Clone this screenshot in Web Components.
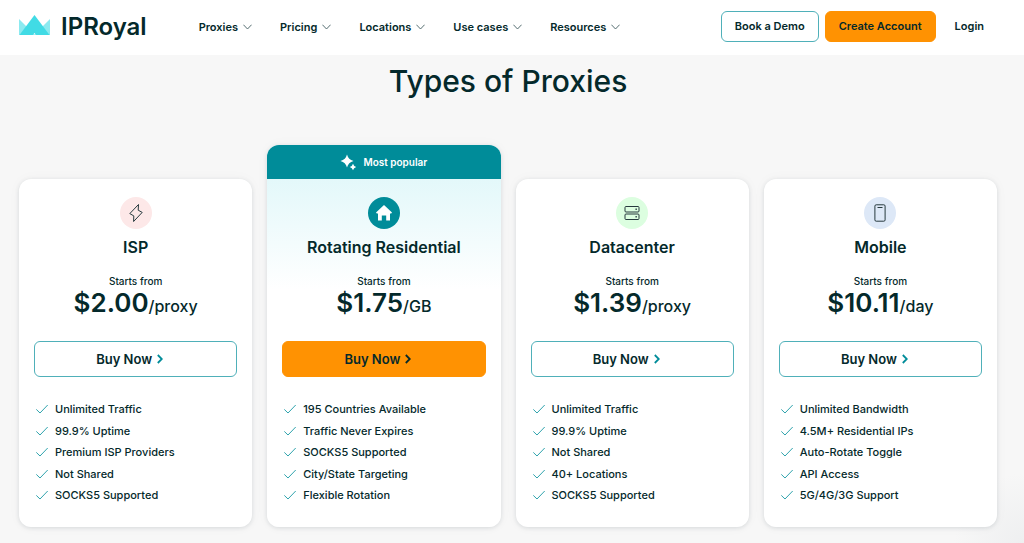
<!DOCTYPE html>
<html lang="en">
<head>
<meta charset="utf-8">
<meta name="viewport" content="width=device-width, initial-scale=1">
<title>IPRoyal - Types of Proxies</title>
<style>
  :root {
    --ink: #04292b;
    --teal: #008c99;
    --orange: #ff9202;
    --gutter-start: 19px;
    --gutter-end: 27px;
  }
  html { background: #f7f7f7; }
  body {
    margin: 0;
    color: var(--ink);
    font-family: Inter, "Liberation Sans", sans-serif;
    background: radial-gradient(circle 70px at 100% 100%, #eeeff0, #f7f7f7);
  }
</style>
</head>
<body>
<site-header>
  <brand-logo slot="brand">IPRoyal</brand-logo>
  <nav-item>Proxies</nav-item>
  <nav-item>Pricing</nav-item>
  <nav-item>Locations</nav-item>
  <nav-item>Use cases</nav-item>
  <nav-item>Resources</nav-item>
  <action-link slot="actions" variant="outline">Book a Demo</action-link>
  <action-link slot="actions" variant="solid">Create Account</action-link>
  <action-link slot="actions">Login</action-link>
</site-header>

<proxy-types>
  <span slot="heading">Types of Proxies</span>
  <price-card icon="bolt" tint="#fde8e8">
    <span slot="name">ISP</span><span slot="amount">$2.00</span><span slot="unit">/proxy</span>
    <check-item>Unlimited Traffic</check-item>
    <check-item>99.9% Uptime</check-item>
    <check-item>Premium ISP Providers</check-item>
    <check-item>Not Shared</check-item>
    <check-item>SOCKS5 Supported</check-item>
  </price-card>
  <price-card icon="home" tint="#008c99" popular>
    <span slot="name">Rotating Residential</span><span slot="amount">$1.75</span><span slot="unit">/GB</span>
    <check-item>195 Countries Available</check-item>
    <check-item>Traffic Never Expires</check-item>
    <check-item>SOCKS5 Supported</check-item>
    <check-item>City/State Targeting</check-item>
    <check-item>Flexible Rotation</check-item>
  </price-card>
  <price-card icon="server" tint="#dcfee0">
    <span slot="name">Datacenter</span><span slot="amount">$1.39</span><span slot="unit">/proxy</span>
    <check-item>Unlimited Traffic</check-item>
    <check-item>99.9% Uptime</check-item>
    <check-item>Not Shared</check-item>
    <check-item>40+ Locations</check-item>
    <check-item>SOCKS5 Supported</check-item>
  </price-card>
  <price-card icon="phone" tint="#dde8f7">
    <span slot="name">Mobile</span><span slot="amount">$10.11</span><span slot="unit">/day</span>
    <check-item>Unlimited Bandwidth</check-item>
    <check-item>4.5M+ Residential IPs</check-item>
    <check-item>Auto-Rotate Toggle</check-item>
    <check-item>API Access</check-item>
    <check-item>5G/4G/3G Support</check-item>
  </price-card>
</proxy-types>

<script>
const define = (name, render) => customElements.define(name, class extends HTMLElement {
  constructor() {
    super();
    this.attachShadow({ mode: 'open' });
  }
  connectedCallback() {
    this.shadowRoot.innerHTML = render(this);
  }
});

const icons = {
  bolt: `<svg width="18" height="20" viewBox="0 0 18 20" fill="none" stroke="#26393d" stroke-width="1" stroke-linejoin="round"><path d="M11.5 1.5 2.8 10.6l4 2.3L6.6 18.5 15.2 9.4l-4-2.2z"/></svg>`,
  home: `<svg width="18" height="18" viewBox="0 0 18 18" fill="#fff"><path d="M9 1 17 8.5l-.8.9H15v7.1h-3.8v-5H6.8v5H3V9.4H1.8L1 8.5z"/></svg>`,
  server: `<svg width="16" height="16" viewBox="0 0 16 16" fill="none" stroke="#26393d" stroke-width="1"><rect x="1" y="1.5" width="14" height="5.5" rx="1"/><rect x="1" y="9" width="14" height="5.5" rx="1"/><path d="M11.5 4.25h1.3M11.5 11.75h1.3" stroke-width="1.3"/></svg>`,
  phone: `<svg width="12" height="18" viewBox="0 0 12 18" fill="none" stroke="#26393d" stroke-width="1"><rect x=".9" y=".8" width="10.2" height="16.4" rx="1.3"/><path d="M3.5 3.5h5"/></svg>`
};

define('brand-logo', () => `
  <style>
    :host { display: block; }
    a { display: flex; align-items: center; gap: 11px; color: inherit; text-decoration: none; font-size: 24px; line-height: 32px; font-weight: 600; }
  </style>
  <a href="#home">
    <svg width="31" height="24" viewBox="0 0 31 24" aria-hidden="true">
      <path d="M0 4v16h16z" fill="#8ceaf0"/><path d="M31 4v16H15z" fill="#8ceaf0"/>
      <path d="M15.5 0 30.5 20H17.3l-1.8-2L13.700 20H.5z" fill="#41dbe5"/>
    </svg>
    <slot></slot>
  </a>`);

define('nav-item', () => `
  <style>
    :host { display: block; }
    button { display: flex; align-items: center; gap: 5px; padding: 0; border: 0; background: none; color: inherit; font: inherit; font-size: 11px; line-height: 16px; font-weight: 600; cursor: pointer; white-space: nowrap; }
  </style>
  <button type="button" aria-haspopup="true"><slot></slot>
    <svg width="9" height="6" viewBox="0 0 9 6" fill="none" stroke="#456063" stroke-width=".9" aria-hidden="true"><path d="M.4.7 4.5 5 8.6.7"/></svg>
  </button>`);

define('action-link', () => `
  <style>
    :host { display: block; }
    a { display: block; padding: 0 12px; border: 1px solid transparent; border-radius: 6px; color: inherit; text-decoration: none; font-size: 11px; line-height: 29px; font-weight: 600; white-space: nowrap; }
    :host([variant]) a { padding: 0 13px; }
    :host([variant=outline]) a { background: #fff; border-color: #4fb0b9; }
    :host([variant=solid]) a { background: var(--orange); border-color: var(--orange); }
  </style>
  <a href="#account"><slot></slot></a>`);

define('site-header', () => `
  <style>
    :host { display: block; background: #fff; }
    header { display: flex; align-items: center; min-height: 55px; box-sizing: border-box; padding: 0 var(--gutter-end) 2px var(--gutter-start); }
    nav { display: flex; gap: 28px; margin-left: 52px; }
    .actions { display: flex; gap: 6px; margin-left: auto; }
  </style>
  <header>
    <slot name="brand"></slot>
    <nav aria-label="Main"><slot></slot></nav>
    <div class="actions"><slot name="actions"></slot></div>
  </header>`);

define('proxy-types', () => `
  <style>
    :host { display: block; }
    main { padding: 6px var(--gutter-end) 16px var(--gutter-start); }
    h2 { margin: 0 0 44px; font-size: 30px; line-height: 40px; font-weight: 500; text-align: center; }
    .grid { display: grid; grid-template-columns: repeat(auto-fit, minmax(200px, 1fr)); gap: 15px; align-items: end; }
  </style>
  <main>
    <h2><slot name="heading"></slot></h2>
    <div class="grid"><slot></slot></div>
  </main>`);

define('check-item', () => `
  <style>
    :host { display: flex; align-items: center; gap: 7px; font-size: 11px; line-height: 16px; font-weight: 500; }
    svg { flex: none; }
  </style>
  <svg width="12" height="10" viewBox="0 0 12 10" fill="none" stroke="#2fa3ad" stroke-width="1" aria-hidden="true"><path d="M.3 5.4 4 9 11.7 1"/></svg>
  <span><slot></slot></span>`);

define('price-card', (el) => `
  <style>
    :host { display: block; border-radius: 12px; background: #fff; box-shadow: 0 1px 4px rgba(20, 50, 60, .13), 0 0 14px rgba(0, 0, 0, .03); }
    :host([popular]) { background: linear-gradient(#e3f8fa 34px, #fff 145px); }
    .banner { display: flex; align-items: center; justify-content: center; gap: 6px; height: 34px; border-radius: 12px 12px 0 0; background: var(--teal); color: #fff; font-size: 10px; font-weight: 600; }
    .body { display: flex; flex-direction: column; padding: 18px 15px 24px; }
    .icon { display: grid; place-items: center; align-self: center; width: 32px; height: 32px; border-radius: 50%; background: ${el.getAttribute('tint')}; }
    h3 { margin: 8px 0 18px; font-size: 16px; line-height: 20px; font-weight: 600; text-align: center; }
    .from { font-size: 10px; line-height: 12px; font-weight: 500; text-align: center; }
    .price { display: flex; align-items: baseline; justify-content: center; height: 32px; margin-bottom: 22px; line-height: 32px; font-size: 26px; font-weight: 600; white-space: nowrap; }
    .unit { font-size: 16px; line-height: 20px; font-weight: 500; }
    button { display: flex; align-items: center; justify-content: center; gap: 5px; height: 36px; margin: 0 0 24px; padding: 0 12px 0 0; border: 1px solid #4fb0b9; border-radius: 6px; background: #fff; color: inherit; font: inherit; font-size: 13px; font-weight: 600; cursor: pointer; }
    button svg { stroke: var(--teal); }
    :host([popular]) button { background: var(--orange); border-color: var(--orange); }
    :host([popular]) button svg { stroke: currentColor; }
    .features { display: flex; flex-direction: column; justify-content: space-between; min-height: 102px; padding-left: 2px; }
  </style>
  ${el.hasAttribute('popular') ? `<div class="banner">
    <svg width="17" height="17" viewBox="0 0 17 17" fill="#fff" aria-hidden="true"><path d="M7 .5Q8.300 5.700 13.500 7 8.300 8.300 7 13.500 5.700 8.300.5 7 5.700 5.700 7 .5zM13 9.800Q13.700 12.300 16.200 13 13.700 13.700 13 16.200 12.300 13.700 9.800 13 12.300 12.300 13 9.800z"/></svg>
    <span>Most popular</span></div>` : ''}
  <div class="body">
    <div class="icon" aria-hidden="true">${icons[el.getAttribute('icon')]}</div>
    <h3><slot name="name"></slot></h3>
    <div class="from">Starts from</div>
    <div class="price"><slot name="amount"></slot><span class="unit"><slot name="unit"></slot></span></div>
    <button type="button">Buy Now
      <svg width="6" height="10" viewBox="0 0 6 10" fill="none" stroke-width="1.8" aria-hidden="true"><path d="M.8 1 4.8 5 .8 9"/></svg>
    </button>
    <div class="features"><slot></slot></div>
  </div>`);
</script>
</body>
</html>
